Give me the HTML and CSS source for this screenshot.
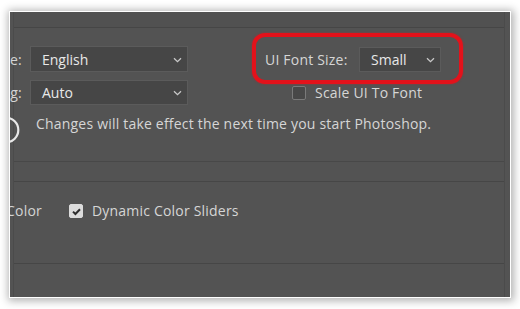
FILE: index.html
```html
<!DOCTYPE html>
<html>
<head>
<meta charset="utf-8">
<link rel="stylesheet" href="styles.css">
</head>
<body>
<div class="frame">
  <div class="content">
    <div class="topstrip"></div>
    <div class="sec1">
      <div class="row row1">
        <div class="clip-label"><span>UI Language:</span></div>
        <div class="select select-wide"><span>English</span><svg class="chev" width="9" height="6" viewBox="0 0 9 6"><path d="M1 1.2 L4.5 4.6 L8 1.2" fill="none" stroke="#c9c9c9" stroke-width="1.3"/></svg></div>
        <div class="label font-label">UI Font Size:</div>
        <div class="select select-small"><span>Small</span><svg class="chev" width="9" height="6" viewBox="0 0 9 6"><path d="M1 1.2 L4.5 4.6 L8 1.2" fill="none" stroke="#c9c9c9" stroke-width="1.3"/></svg></div>
      </div>
      <div class="row row2">
        <div class="clip-label"><span>UI Scaling:</span></div>
        <div class="select select-wide select-h25"><span>Auto</span><svg class="chev" width="9" height="6" viewBox="0 0 9 6"><path d="M1 1.2 L4.5 4.6 L8 1.2" fill="none" stroke="#c9c9c9" stroke-width="1.3"/></svg></div>
        <div class="check-row scale-check">
          <span class="checkbox"></span>
          <span class="label">Scale UI To Font</span>
        </div>
      </div>
      <div class="row row3">
        <svg class="info" width="28" height="28" viewBox="0 0 28 28"><circle cx="14" cy="14" r="12.3" fill="none" stroke="#e8e8e8" stroke-width="2.2"/><circle cx="14" cy="8.5" r="1.6" fill="#e8e8e8"/><rect x="12.8" y="11.5" width="2.4" height="9" fill="#e8e8e8"/></svg>
        <div class="label note">Changes will take effect the next time you start Photoshop.</div>
      </div>
    </div>
    <div class="gap"></div>
    <div class="sec2">
      <div class="row row4">
        <div class="clip-label clip-label-long"><span>Show Channels in Color</span></div>
        <div class="check-row dyn-check">
          <span class="checkbox checked"><svg width="13" height="13" viewBox="0 0 13 13"><path d="M3 6.6 L5.4 9 L10 4.2" fill="none" stroke="#2e2e2e" stroke-width="2"/></svg></span>
          <span class="label">Dynamic Color Sliders</span>
        </div>
      </div>
    </div>
  </div>
  <div class="highlight"></div>
</div>
</body>
</html>
```

FILE: styles.css
```css
html, body {
  margin: 0;
  padding: 0;
  background: #ffffff;
}

body {
  width: 520px;
  height: 309px;
  overflow: hidden;
  font-family: "Open Sans", "Noto Sans", "DejaVu Sans", sans-serif;
  font-size: 14px;
  letter-spacing: 0.2px;
  color: #d4d4d4;
}

.frame {
  position: relative;
  margin: 11px 0 0 9px;
  width: 500px;
  height: 285px;
  border: 1px solid #ffffff;
  background: #535353;
  box-shadow: 1px 1px 8px 2px rgba(0, 0, 0, 0.3);
  overflow: hidden;
}

.content {
  margin: 0 5px 0 3px;
  height: 100%;
  border-left: 1px solid #4b4b4b;
  border-right: 1px solid #4b4b4b;
  display: flex;
  flex-direction: column;
}

.topstrip {
  height: 15px;
  border-bottom: 1px solid #464646;
  background: #515151;
}

.sec1 {
  height: 134px;
  box-sizing: border-box;
  padding-top: 18px;
  border-bottom: 1px solid #484848;
}

.gap {
  height: 19px;
}

.sec2 {
  height: 83px;
  box-sizing: border-box;
  padding-top: 19px;
  border-top: 1px solid #464646;
  border-bottom: 1px solid #464646;
}

.row {
  display: flex;
  align-items: center;
}

.row2 {
  margin-top: 8px;
}

.row3 {
  margin-top: 12px;
  align-items: flex-start;
}

.clip-label {
  width: 8px;
  display: flex;
  justify-content: flex-end;
  white-space: nowrap;
  flex-shrink: 0;
}

.clip-label-long {
  width: 28px;
}

.label {
  white-space: nowrap;
  color: #d6d6d6;
}

.select {
  box-sizing: border-box;
  height: 26px;
  margin-left: 8px;
  background: #464646;
  border: 1px solid #5b5b5b;
  display: flex;
  align-items: center;
  justify-content: space-between;
  padding: 0 5px 0 11px;
  font-size: 14px;
  letter-spacing: 0;
  color: #e8e8e8;
  flex-shrink: 0;
}

.select-h25 {
  height: 25px;
}

.select-wide {
  width: 158px;
}

.select-small {
  width: 82px;
  height: 25px;
  margin-left: 7px;
}

.chev {
  display: block;
  margin-top: 1px;
}

.font-label {
  margin-left: 77px;
  width: 87px;
}

.check-row {
  display: flex;
  align-items: center;
}

.scale-check {
  margin-left: 104px;
}

.checkbox {
  box-sizing: border-box;
  width: 14px;
  height: 14px;
  border: 1px solid #7a7a7a;
  border-radius: 2px;
  background: #484848;
  margin-right: 9px;
  display: block;
  flex-shrink: 0;
}

.checkbox.checked {
  background: #dcdcdc;
  border-color: #dcdcdc;
}

.checkbox.checked svg {
  display: block;
  margin: 0 0 0 -0.5px;
}

.info {
  display: block;
  margin-left: -22px;
  margin-top: -1px;
  flex-shrink: 0;
}

.note {
  margin-left: 16px;
  margin-top: -3px;
}

.dyn-check {
  margin-left: 27px;
}

.highlight {
  position: absolute;
  left: 242px;
  top: 21px;
  width: 203px;
  height: 43px;
  border: 4px solid #e3121b;
  border-radius: 13px;
  box-shadow: 0 0 2px rgba(227, 18, 27, 0.6);
}
```
